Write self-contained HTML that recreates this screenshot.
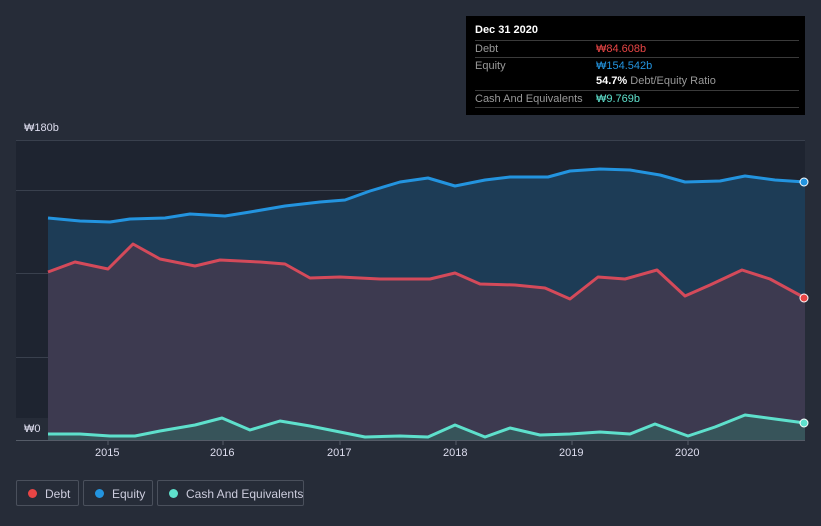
<!DOCTYPE html>
<html><head><meta charset="utf-8"><style>
body{margin:0;width:821px;height:526px;background:#262c38;font-family:"Liberation Sans",sans-serif;overflow:hidden;position:relative}
.tt{position:absolute;left:466px;top:16px;width:339px;height:99px;background:#000;color:#fff;font-size:11px}
.tt .h{position:absolute;left:9px;top:8px;font-weight:bold;font-size:11px}
.row{position:absolute;left:9px;width:324px;border-top:1px solid #3a3a3a;height:16px;line-height:16px;color:#999;white-space:nowrap}
.row span{position:absolute;left:121px}
.leg{position:absolute;top:480px;height:26px;border:1px solid #4a505c;border-radius:2px;color:#ccd;font-size:12px;line-height:26px;box-sizing:border-box;white-space:nowrap}
.leg i{position:absolute;left:11px;top:8px;width:9px;height:9px;border-radius:50%}
.leg b{font-weight:normal;position:absolute;left:28px}
.ax{position:absolute;color:#dde;font-size:11px}
</style></head><body>
<svg width="821" height="526" style="position:absolute;left:0;top:0">
<rect x="16" y="140" width="789" height="300" fill="#1e2430"/>
<g stroke="#39404d" stroke-width="1"><line x1="16" y1="140.5" x2="805" y2="140.5"/><line x1="16" y1="190.5" x2="805" y2="190.5"/><line x1="16" y1="273.5" x2="805" y2="273.5"/><line x1="16" y1="357.5" x2="805" y2="357.5"/></g>
<polygon fill="#1d3c56" points="48,440 48,218 80,221 110,222 130,219 165,218 190,214 225,216 250,212 285,206 320,202 345,200 370,191 400,182 428,178 455,186 485,180 510,177 548,177 570,171 600,169 630,170 660,175 685,182 720,181 745,176 775,180 805,182 805,440"/>
<polygon fill="#3d3a50" points="48,440 48,272 75,262 108,269 133,244 160,259 195,266 220,260 260,262 285,264 310,278 340,277 380,279 430,279 455,273 480,284 515,285 545,288 570,299 598,277 625,279 657,270 685,296 710,285 742,270 770,279 805,298 805,440"/>
<polygon fill="#37545a" points="48,440 48,434 80,434 110,436 135,436 160,431 195,425 222,418 250,430 280,421 310,426 340,432 365,437 400,436 428,437 455,425 485,437 510,428 540,435 570,434 600,432 630,434 655,424 688,436 715,427 745,415 775,419 805,423 805,440"/>
<g fill="none" stroke-width="3" stroke-linejoin="round">
<polyline stroke="#2394df" points="48,218 80,221 110,222 130,219 165,218 190,214 225,216 250,212 285,206 320,202 345,200 370,191 400,182 428,178 455,186 485,180 510,177 548,177 570,171 600,169 630,170 660,175 685,182 720,181 745,176 775,180 805,182"/>
<polyline stroke="#d44a5a" points="48,272 75,262 108,269 133,244 160,259 195,266 220,260 260,262 285,264 310,278 340,277 380,279 430,279 455,273 480,284 515,285 545,288 570,299 598,277 625,279 657,270 685,296 710,285 742,270 770,279 805,298"/>
<polyline stroke="#5ee0cc" points="48,434 80,434 110,436 135,436 160,431 195,425 222,418 250,430 280,421 310,426 340,432 365,437 400,436 428,437 455,425 485,437 510,428 540,435 570,434 600,432 630,434 655,424 688,436 715,427 745,415 775,419 805,423"/>
</g>
<circle cx="804" cy="182" r="4" fill="#2394df" stroke="#fff" stroke-width="1"/>
<circle cx="804" cy="298" r="4" fill="#e84545" stroke="#fff" stroke-width="1"/>
<circle cx="804" cy="423" r="4" fill="#5ee0cc" stroke="#fff" stroke-width="1"/>
<rect x="16" y="418" width="32" height="22" fill="#262c38"/>
<line x1="16" y1="440.5" x2="805" y2="440.5" stroke="#555c68"/>
<g stroke="#555c68"><line x1="108" y1="441" x2="108" y2="445"/><line x1="223" y1="441" x2="223" y2="445"/><line x1="340" y1="441" x2="340" y2="445"/><line x1="456" y1="441" x2="456" y2="445"/><line x1="572" y1="441" x2="572" y2="445"/><line x1="688" y1="441" x2="688" y2="445"/></g>
</svg>
<div class="ax" style="left:24px;top:122px">₩180b</div>
<div class="ax" style="left:24px;top:423px">₩0</div>
<div class="ax" style="left:95px;top:447px">2015</div>
<div class="ax" style="left:210px;top:447px">2016</div>
<div class="ax" style="left:327px;top:447px">2017</div>
<div class="ax" style="left:443px;top:447px">2018</div>
<div class="ax" style="left:559px;top:447px">2019</div>
<div class="ax" style="left:675px;top:447px">2020</div>
<div class="tt"><div class="h">Dec 31 2020</div>
<div class="row" style="top:24px">Debt<span style="color:#e84545">₩84.608b</span></div>
<div class="row" style="top:41px">Equity<span style="color:#2394df">₩154.542b</span></div>
<div class="row" style="top:57px;border-top:none"><span style="color:#999"><b style="color:#fff">54.7%</b> Debt/Equity Ratio</span></div>
<div class="row" style="top:74px;border-bottom:1px solid #3a3a3a">Cash And Equivalents<span style="color:#5ee0cc">₩9.769b</span></div>
</div>
<div class="leg" style="left:16px;width:63px"><i style="background:#e84545"></i><b>Debt</b></div>
<div class="leg" style="left:83px;width:70px"><i style="background:#2394df"></i><b>Equity</b></div>
<div class="leg" style="left:157px;width:147px"><i style="background:#5ee0cc"></i><b>Cash And Equivalents</b></div>
</body></html>
